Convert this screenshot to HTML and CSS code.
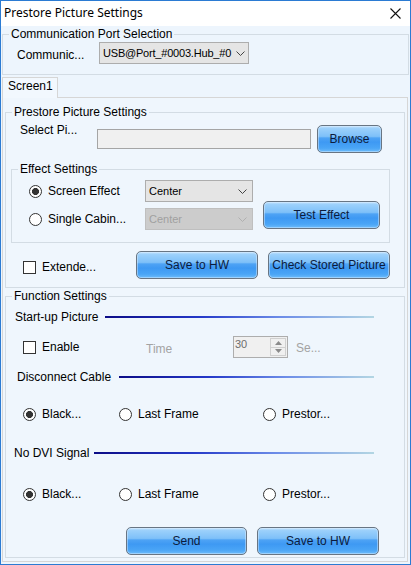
FILE: index.html
```html
<!DOCTYPE html>
<html>
<head>
<meta charset="utf-8">
<link rel="stylesheet" href="styles.css">
</head>
<body>
<div class="window">
  <div class="titlebar">
    <span class="title">Prestore Picture Settings</span>
    <svg class="close" width="11" height="11" viewBox="0 0 11 11"><path d="M0.5 0.5 L10.5 10.5 M10.5 0.5 L0.5 10.5" stroke="#111" stroke-width="1.1" fill="none"/></svg>
  </div>
  <div class="content">
    <fieldset class="group port">
      <legend>Communication Port Selection</legend>
      <div class="port-row">
        <span class="port-label">Communic...</span>
        <div class="combo port-combo"><span>USB@Port_#0003.Hub_#0</span><svg class="chev" width="9" height="5" viewBox="0 0 9 5"><path d="M0.5 0.5 L4.5 4.5 L8.5 0.5" stroke="#444" fill="none"/></svg></div>
      </div>
    </fieldset>

    <div class="tabs">
      <div class="tab">Screen1</div>
      <div class="tab-fill"></div>
    </div>

    <div class="tabpanel">
      <fieldset class="group prestore">
        <legend>Prestore Picture Settings</legend>
        <div class="select-row">
          <span class="select-label">Select Pi...</span>
          <div class="textbox"></div>
          <button class="btn browse">Browse</button>
        </div>

        <fieldset class="group effect">
          <legend>Effect Settings</legend>
          <div class="effect-body">
            <div class="effect-opts">
              <div class="opt-row">
                <span class="radio checked"></span>
                <span class="opt-label">Screen Effect</span>
                <div class="combo center-combo"><span>Center</span><svg class="chev" width="9" height="5" viewBox="0 0 9 5"><path d="M0.5 0.5 L4.5 4.5 L8.5 0.5" stroke="#444" fill="none"/></svg></div>
              </div>
              <div class="opt-row">
                <span class="radio"></span>
                <span class="opt-label">Single Cabin...</span>
                <div class="combo center-combo disabled"><span>Center</span><svg class="chev" width="9" height="5" viewBox="0 0 9 5"><path d="M0.5 0.5 L4.5 4.5 L8.5 0.5" stroke="#b0b0b0" fill="none"/></svg></div>
              </div>
            </div>
            <button class="btn test">Test Effect</button>
          </div>
        </fieldset>

        <div class="action-row">
          <div class="check-item">
            <span class="checkbox"></span>
            <span class="check-label">Extende...</span>
          </div>
          <button class="btn wide">Save to HW</button>
          <button class="btn wide gap">Check Stored Picture</button>
        </div>
      </fieldset>

      <fieldset class="group function">
        <legend>Function Settings</legend>

        <div class="sep-row startup">
          <span class="sep-label">Start-up Picture</span>
          <span class="sep-line"></span>
        </div>

        <div class="enable-row">
          <span class="checkbox"></span>
          <span class="enable-label">Enable</span>
          <span class="time-label">Time</span>
          <div class="spinner">
            <span class="spin-val">30</span>
            <div class="spin-btns">
              <span class="spin-btn"><svg width="7" height="4" viewBox="0 0 7 4"><path d="M0 4 L3.5 0 L7 4 Z" fill="#8a8a8a"/></svg></span>
              <span class="spin-btn"><svg width="7" height="4" viewBox="0 0 7 4"><path d="M0 0 L3.5 4 L7 0 Z" fill="#8a8a8a"/></svg></span>
            </div>
          </div>
          <span class="sec-label">Se...</span>
        </div>

        <div class="sep-row disconnect">
          <span class="sep-label">Disconnect Cable</span>
          <span class="sep-line"></span>
        </div>

        <div class="radio-row first">
          <div class="radio-item"><span class="radio checked"></span><span class="radio-label">Black...</span></div>
          <div class="radio-item"><span class="radio"></span><span class="radio-label">Last Frame</span></div>
          <div class="radio-item"><span class="radio"></span><span class="radio-label">Prestor...</span></div>
        </div>

        <div class="sep-row nodvi">
          <span class="sep-label">No DVI Signal</span>
          <span class="sep-line"></span>
        </div>

        <div class="radio-row second">
          <div class="radio-item"><span class="radio checked"></span><span class="radio-label">Black...</span></div>
          <div class="radio-item"><span class="radio"></span><span class="radio-label">Last Frame</span></div>
          <div class="radio-item"><span class="radio"></span><span class="radio-label">Prestor...</span></div>
        </div>

        <div class="bottom-row">
          <button class="btn send">Send</button>
          <button class="btn save">Save to HW</button>
        </div>
      </fieldset>
    </div>
  </div>
</div>
</body>
</html>
```

FILE: styles.css
```css
* { box-sizing: border-box; }
html, body { margin: 0; padding: 0; background: #ffffff; }
body { font: 12px/14px "Liberation Sans", Arial, sans-serif; color: #000; }

.window {
  width: 411px;
  height: 565px;
  border: 1px solid #2b7bd3;
  display: flex;
  flex-direction: column;
  background: #ffffff;
}

.titlebar {
  height: 25px;
  flex: none;
  display: flex;
  align-items: center;
  justify-content: space-between;
  padding: 0 9px 2px 3px;
  background: #ffffff;
}
.title { font: 12px/16px "Noto Sans", sans-serif; color: #000; }
.close { display: block; margin-top: 2px; }

.content {
  flex: 1;
  background: #edf5fd;
  padding: 1px 1px 1px 1px;
  display: flex;
  flex-direction: column;
}

.group {
  border: 1px solid #d3dce4;
  margin: 0;
  padding: 0;
  min-width: 0;
}
.group > legend {
  margin-left: 6px;
  padding: 0 2px;
  font: 12px/14px "Liberation Sans", Arial, sans-serif;
}

/* communication port */
.port-row {
  display: flex;
  align-items: center;
  height: 22px;
  margin-top: 1px;
  margin-bottom: 10px;
  padding-left: 14px;
}
.port-label { width: 82px; padding-top: 4px; }

.combo {
  display: flex;
  align-items: center;
  justify-content: space-between;
  height: 22px;
  border: 1px solid #adadad;
  background: #e5e5e5;
  padding: 0 3px 0 3px;
  white-space: nowrap;
  font-size: 11px;
}
.combo .chev { display: block; flex: none; }
.port-combo { width: 150px; letter-spacing: -0.2px; }
.center-combo { width: 108px; padding-right: 5px; }
.combo.disabled { background: #cccccc; border-color: #bfbfbf; color: #a0a0a0; }

/* tabs */
.tabs {
  display: flex;
  height: 21px;
  margin-top: 2px;
  margin-right: 1px;
}
.tab {
  width: 56px;
  border: 1px solid #d6d6d6;
  border-bottom: none;
  padding: 1px 0 0 5px;
  background: #f2f8fe;
}
.tab-fill { flex: 1; border-bottom: 1px solid #d6d6d6; }

.tabpanel {
  margin-right: 1px;
  border: 1px solid #d6d6d6;
  border-top: none;
  padding: 7px 2px 3px 2px;
  background: #eff6fd;
}

/* prestore */
.select-row {
  display: flex;
  align-items: flex-start;
  padding: 4px 0 0 14px;
}
.select-label { width: 77px; }
.textbox {
  width: 214px;
  height: 20px;
  margin-top: 6px;
  border: 1px solid #a5a5a5;
  background: #f0f0f0;
}

.btn {
  display: flex;
  align-items: center;
  justify-content: center;
  height: 28px;
  padding: 0 0 1px 0;
  border: 1px solid #687583;
  border-radius: 5px;
  background: linear-gradient(to bottom, #c3e2fd 0%, #9bd0fb 10%, #7ec0f9 40%, #4ea3f5 46%, #3e99f3 62%, #4aa5f6 85%, #6dbcfb 100%);
  box-shadow: inset 0 0 0 1px rgba(225, 240, 255, 0.45);
  color: #0c1b3c;
  font: 12px/14px "Liberation Sans", Arial, sans-serif;
  white-space: nowrap;
}
.browse { width: 65px; margin: 2px 0 0 6px; }

.effect {
  width: 379px;
  margin: 9px 0 0 5px;
}
.effect-body {
  display: flex;
  align-items: flex-start;
  padding: 4px 0 12px 17px;
}
.effect-opts { display: flex; flex-direction: column; gap: 6px; }
.opt-row { display: flex; align-items: center; height: 22px; }
.opt-label { width: 97px; margin-left: 6px; }
.test { width: 117px; margin: 21px 0 0 10px; }

.radio {
  width: 13px;
  height: 13px;
  flex: none;
  border: 1px solid #333333;
  border-radius: 50%;
  background: #ffffff;
}
.radio.checked {
  background: radial-gradient(circle, #333333 0, #333333 3.2px, #ffffff 3.8px);
}
.checkbox {
  width: 13px;
  height: 13px;
  flex: none;
  border: 1px solid #333333;
  background: #ffffff;
}

.action-row {
  display: flex;
  align-items: center;
  margin-top: 8px;
  margin-bottom: 8px;
  padding-left: 17px;
}
.check-item { display: flex; align-items: center; width: 113px; padding-top: 4px; }
.check-label { margin-left: 6px; }
.wide { width: 122px; }
.gap { margin-left: 10px; }

/* function settings */
.function { margin-top: 1px; }
.sep-row { display: flex; align-items: center; height: 14px; }
.sep-line {
  flex: 1;
  height: 2px;
  margin-right: 30px;
  background: linear-gradient(to right, #0c0c86 0%, #2438c8 35%, #6c8ce8 65%, #b3d6e3 100%);
}
.startup { margin-top: 7px; padding-left: 9px; }
.startup .sep-label { width: 90px; }
.disconnect { margin-top: 12px; padding-left: 11px; }
.disconnect .sep-label { width: 102px; }
.nodvi { margin-top: 25px; padding-left: 8px; }
.nodvi .sep-label { width: 80px; }

.enable-row {
  display: flex;
  align-items: center;
  height: 22px;
  margin-top: 12px;
  padding-left: 17px;
}
.enable-label { width: 104px; margin-left: 6px; }
.time-label { width: 87px; color: #a3a3a3; padding-top: 4px; }
.spinner {
  display: flex;
  width: 55px;
  height: 22px;
  border: 1px solid #adadad;
  background: #f0f0f0;
}
.spin-val { flex: 1; padding-left: 1px; color: #6d6d6d; font-size: 11px; }
.spin-btns {
  width: 16px;
  display: flex;
  flex-direction: column;
  margin: 1px 1px 1px 0;
  border: 1px solid #d0d0d0;
}
.spin-btn {
  flex: 1;
  display: flex;
  align-items: center;
  justify-content: center;
}
.spin-btn + .spin-btn { border-top: 1px solid #d0d0d0; }
.spin-btn svg { display: block; }
.sec-label { margin-left: 8px; color: #a3a3a3; padding-top: 2px; }

.radio-row {
  display: grid;
  grid-template-columns: 96px 144px 1fr;
  height: 14px;
  padding-left: 17px;
}
.radio-row.first { margin-top: 23px; }
.radio-row.second { margin-top: 27px; }
.radio-item { display: flex; align-items: center; }
.radio-label { margin-left: 6px; }

.bottom-row {
  display: flex;
  margin-top: 26px;
  margin-bottom: 2px;
  padding-left: 120px;
}
.send { width: 121px; }
.save { width: 122px; margin-left: 10px; }
```
